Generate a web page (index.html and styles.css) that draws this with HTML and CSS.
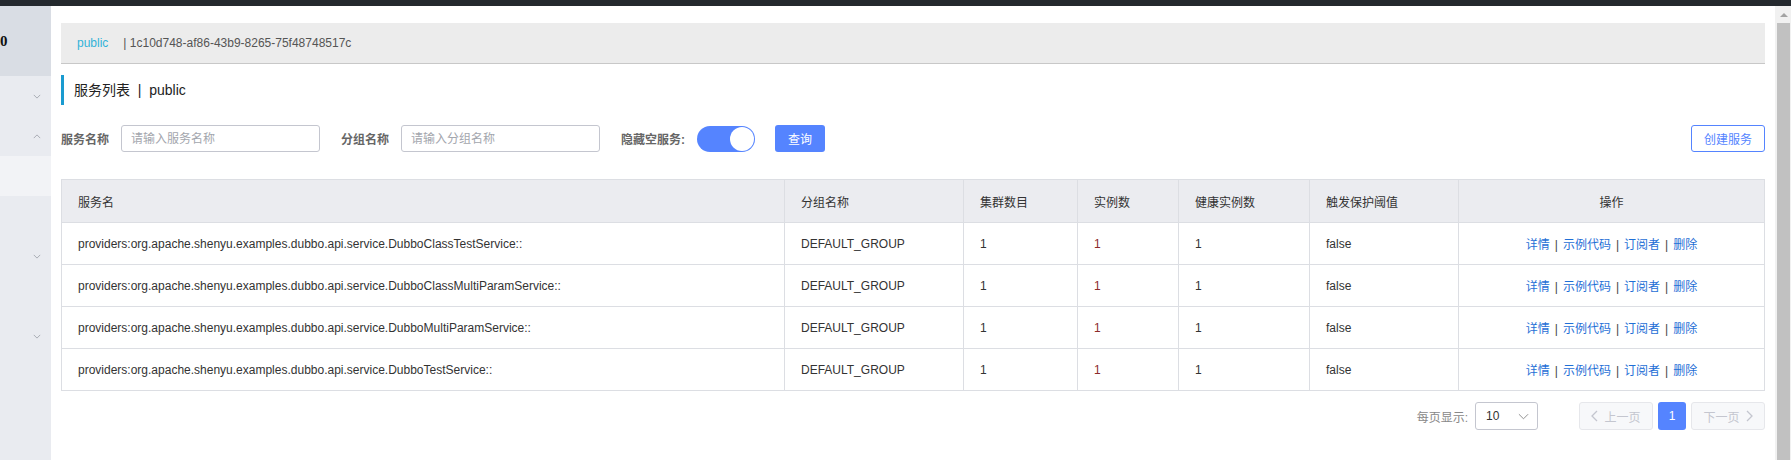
FILE: index.html
```html
<!DOCTYPE html>
<html lang="zh-CN">
<head>
    <meta charset="UTF-8">
    <title>服务列表</title>
    <link rel="stylesheet" href="styles.css">
</head>
<body>
    <div class="topbar"></div>
    <div class="frame">
        <div class="sidebar">
            <div class="side-head"><span class="side-logo">0</span></div>
            <div class="side-item"><svg class="chev" viewBox="0 0 10 6"><polyline points="1,1 5,5 9,1"/></svg></div>
            <div class="side-item"><svg class="chev" viewBox="0 0 10 6"><polyline points="1,5 5,1 9,5"/></svg></div>
            <div class="side-item active"></div>
            <div class="side-item"></div>
            <div class="side-item"><svg class="chev" viewBox="0 0 10 6"><polyline points="1,1 5,5 9,1"/></svg></div>
            <div class="side-item"></div>
            <div class="side-item"><svg class="chev" viewBox="0 0 10 6"><polyline points="1,1 5,5 9,1"/></svg></div>
        </div>

        <div class="main">
            <div class="ns-bar">
                <span class="ns-name">public</span>
                <span class="ns-id">| 1c10d748-af86-43b9-8265-75f48748517c</span>
            </div>

            <div class="page-title">服务列表 &nbsp;|&nbsp; public</div>

            <div class="filters">
                <span class="filter-label">服务名称</span>
                <input class="filter-input" type="text" placeholder="请输入服务名称">
                <span class="filter-label">分组名称</span>
                <input class="filter-input" type="text" placeholder="请输入分组名称">
                <span class="filter-label">隐藏空服务:</span>
                <span class="switch"><span class="switch-knob"></span></span>
                <button class="btn btn-primary">查询</button>
                <button class="btn btn-outline">创建服务</button>
            </div>

            <table class="svc-table">
                <colgroup>
                    <col class="c-name">
                    <col class="c-group">
                    <col class="c-cluster">
                    <col class="c-inst">
                    <col class="c-healthy">
                    <col class="c-threshold">
                    <col class="c-ops">
                </colgroup>
                <thead>
                    <tr>
                        <th>服务名</th>
                        <th>分组名称</th>
                        <th>集群数目</th>
                        <th>实例数</th>
                        <th>健康实例数</th>
                        <th>触发保护阈值</th>
                        <th class="ops">操作</th>
                    </tr>
                </thead>
                <tbody>
                    <tr>
                        <td>providers:org.apache.shenyu.examples.dubbo.api.service.DubboClassTestService::</td>
                        <td>DEFAULT_GROUP</td>
                        <td>1</td>
                        <td class="inst">1</td>
                        <td>1</td>
                        <td>false</td>
                        <td class="ops"><a>详情</a><span class="sep">|</span><a>示例代码</a><span class="sep">|</span><a>订阅者</a><span class="sep">|</span><a>删除</a></td>
                    </tr>
                    <tr>
                        <td>providers:org.apache.shenyu.examples.dubbo.api.service.DubboClassMultiParamService::</td>
                        <td>DEFAULT_GROUP</td>
                        <td>1</td>
                        <td class="inst">1</td>
                        <td>1</td>
                        <td>false</td>
                        <td class="ops"><a>详情</a><span class="sep">|</span><a>示例代码</a><span class="sep">|</span><a>订阅者</a><span class="sep">|</span><a>删除</a></td>
                    </tr>
                    <tr>
                        <td>providers:org.apache.shenyu.examples.dubbo.api.service.DubboMultiParamService::</td>
                        <td>DEFAULT_GROUP</td>
                        <td>1</td>
                        <td class="inst">1</td>
                        <td>1</td>
                        <td>false</td>
                        <td class="ops"><a>详情</a><span class="sep">|</span><a>示例代码</a><span class="sep">|</span><a>订阅者</a><span class="sep">|</span><a>删除</a></td>
                    </tr>
                    <tr>
                        <td>providers:org.apache.shenyu.examples.dubbo.api.service.DubboTestService::</td>
                        <td>DEFAULT_GROUP</td>
                        <td>1</td>
                        <td class="inst">1</td>
                        <td>1</td>
                        <td>false</td>
                        <td class="ops"><a>详情</a><span class="sep">|</span><a>示例代码</a><span class="sep">|</span><a>订阅者</a><span class="sep">|</span><a>删除</a></td>
                    </tr>
                </tbody>
            </table>

            <div class="pager">
                <span class="pager-label">每页显示:</span>
                <span class="page-size">10<svg class="sel-arrow" viewBox="0 0 12 7"><polyline points="1,1 6,6 11,1"/></svg></span>
                <span class="page-btn disabled prev"><svg class="pg-arrow" viewBox="0 0 7 12"><polyline points="6,1 1,6 6,11"/></svg>上一页</span>
                <span class="page-btn current">1</span>
                <span class="page-btn disabled next">下一页<svg class="pg-arrow" viewBox="0 0 7 12"><polyline points="1,1 6,6 1,11"/></svg></span>
            </div>
        </div>

        <div class="scrollbar">
            <div class="scroll-up"></div>
            <div class="scroll-thumb"></div>
        </div>
    </div>
</body>
</html>
```

FILE: styles.css
```css
body {
    margin: 0;
    width: 1791px;
    height: 460px;
    overflow: hidden;
    font-family: 'Liberation Sans', 'Noto Sans CJK SC', sans-serif;
    font-size: 12px;
    color: #333;
    background-color: #fff;
}

.topbar {
    height: 6px;
    background-color: #24292e;
}

.frame {
    display: flex;
    height: 454px;
}

/* sidebar */
.sidebar {
    width: 51px;
    flex-shrink: 0;
    background-color: #e9ebf0;
}

.side-head {
    height: 70px;
    background-color: #d9dde4;
    display: flex;
    align-items: center;
    overflow: hidden;
}

.side-logo {
    font-family: 'Liberation Serif', serif;
    font-weight: bold;
    font-size: 15px;
    color: #111;
    margin-left: 0;
}

.side-item {
    height: 40px;
    display: flex;
    align-items: center;
    justify-content: flex-end;
    padding-right: 10px;
}

    .side-item.active {
        background-color: #f2f3f6;
    }

.chev {
    width: 8px;
    height: 5px;
    fill: none;
    stroke: #9a9ea6;
    stroke-width: 1;
}

/* main */
.main {
    flex: 1;
    padding: 17px 10px 0 10px;
}

.ns-bar {
    height: 40px;
    background-color: #ececec;
    border-bottom: 1px solid #c8c8c8;
    display: flex;
    align-items: center;
    padding-left: 16px;
}

.ns-name {
    color: #33b3d8;
    margin-right: 15px;
}

.ns-id {
    color: #555;
}

.page-title {
    margin-top: 11px;
    height: 30px;
    line-height: 30px;
    border-left: 3px solid #1a9bd0;
    padding-left: 10px;
    font-size: 14px;
    color: #222;
}

.filters {
    margin-top: 20px;
    display: flex;
    align-items: center;
    height: 27px;
}

.filter-label {
    font-weight: bold;
    color: #666;
    margin-right: 12px;
}

.filter-input {
    box-sizing: border-box;
    width: 199px;
    height: 27px;
    border: 1px solid #c4c6cf;
    border-radius: 3px;
    padding: 0 9px;
    margin-right: 21px;
    font-family: inherit;
    font-size: 12px;
    color: #333;
    outline: none;
}

    .filter-input::placeholder {
        color: #a3a6ad;
    }

.switch {
    box-sizing: border-box;
    width: 58px;
    height: 26px;
    border-radius: 13px;
    background-color: #5584ff;
    display: flex;
    justify-content: flex-end;
    align-items: center;
    padding: 1px;
    margin-right: 20px;
}

.switch-knob {
    width: 24px;
    height: 24px;
    border-radius: 50%;
    background-color: #fff;
}

.btn {
    box-sizing: border-box;
    height: 27px;
    border-radius: 3px;
    font-family: inherit;
    font-size: 12px;
    padding: 0;
    cursor: pointer;
}

.btn-primary {
    width: 50px;
    border: none;
    background-color: #5584ff;
    color: #fff;
}

.btn-outline {
    width: 74px;
    margin-left: auto;
    border: 1px solid #5584ff;
    background-color: #fff;
    color: #5584ff;
}

/* table */
.svc-table {
    margin-top: 27px;
    width: 100%;
    table-layout: fixed;
    border-collapse: collapse;
    border: 1px solid #dcdee3;
}

.c-name { width: 723px; }
.c-group { width: 179px; }
.c-cluster { width: 114px; }
.c-inst { width: 101px; }
.c-healthy { width: 131px; }
.c-threshold { width: 149px; }
.c-ops { width: 306px; }

.svc-table th,
.svc-table td {
    border: 1px solid #dcdee3;
    padding: 0 16px;
    text-align: left;
    white-space: nowrap;
    overflow: hidden;
}

.svc-table th {
    height: 42px;
    background-color: #ebecf0;
    font-weight: normal;
    color: #333;
}

.svc-table td {
    height: 41px;
    color: #333;
}

    .svc-table td.inst {
        color: #8c2b2b;
    }

.svc-table .ops {
    text-align: center;
}

.ops a {
    color: #1f6fd6;
}

.ops .sep {
    color: #444;
    margin: 0 5px;
}

/* pagination */
.pager {
    margin-top: 11px;
    display: flex;
    justify-content: flex-end;
    align-items: center;
    height: 28px;
}

.pager-label {
    color: #888;
    margin-right: 7px;
}

.page-size {
    box-sizing: border-box;
    width: 63px;
    height: 28px;
    border: 1px solid #c4c6cf;
    border-radius: 3px;
    display: flex;
    align-items: center;
    justify-content: space-between;
    padding: 0 8px 0 10px;
    color: #333;
    margin-right: 41px;
}

.sel-arrow {
    width: 11px;
    height: 7px;
    fill: none;
    stroke: #888;
    stroke-width: 1;
}

.page-btn {
    box-sizing: border-box;
    height: 28px;
    border-radius: 3px;
    display: flex;
    align-items: center;
    justify-content: center;
}

    .page-btn.disabled {
        width: 74px;
        background-color: #f7f8fa;
        border: 1px solid #e6e7eb;
        color: #c4c6cf;
    }

    .page-btn.current {
        width: 28px;
        margin: 0 5px;
        background-color: #5584ff;
        color: #fff;
    }

.pg-arrow {
    width: 7px;
    height: 12px;
    fill: none;
    stroke: #c4c6cf;
    stroke-width: 1.3;
}

.prev .pg-arrow { margin-right: 6px; }
.next .pg-arrow { margin-left: 6px; }

/* fake browser scrollbar */
.scrollbar {
    width: 17px;
    flex-shrink: 0;
    background-color: #f1f1f1;
    display: flex;
    flex-direction: column;
    align-items: center;
}

.scroll-up {
    margin-top: 7px;
    width: 0;
    height: 0;
    border-left: 4px solid transparent;
    border-right: 4px solid transparent;
    border-bottom: 4px solid #a3a3a3;
}

.scroll-thumb {
    margin-top: 6px;
    width: 13px;
    flex: 1;
    background-color: #c1c1c1;
}
```
